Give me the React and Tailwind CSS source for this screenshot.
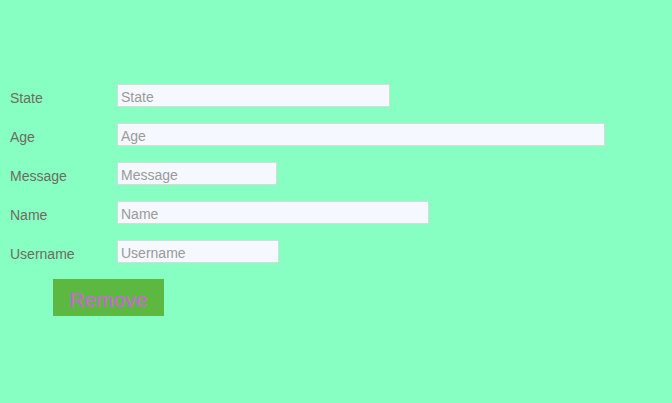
const FIELDS = [
  { label: "State", w: "w-[273px]" },
  { label: "Age", w: "w-[488px]" },
  { label: "Message", w: "w-[160px]" },
  { label: "Name", w: "w-[312px]" },
  { label: "Username", w: "w-[162px]" },
];

export default function App() {
  return (
    <div className="min-h-[403px] bg-[#88ffc2] pt-[84px] pl-[10px] font-['Liberation_Sans',Arial,sans-serif]">
      <div className="flex flex-col gap-[16px]">
        {FIELDS.map((f) => (
          <div key={f.label} className="flex h-[23px] items-center">
            <label className="w-[107px] translate-y-[3px] text-[14px] leading-[19px] text-[#6b6b5e]">{f.label}</label>
            <input
              placeholder={f.label}
              className={`${f.w} h-[23px] border border-[#d4dcd8] bg-[#f5f9ff] px-[3px] pt-[2px] text-[14px] text-gray-700 placeholder:text-[#9a9a9a] outline-none`}
            />
          </div>
        ))}
      </div>
      <button className="mt-[16px] ml-[43px] h-[37px] w-[111px] bg-[#5cb840] pt-[4px] text-[21px] leading-none text-[#d65fe0]">
        Remove
      </button>
    </div>
  );
}
